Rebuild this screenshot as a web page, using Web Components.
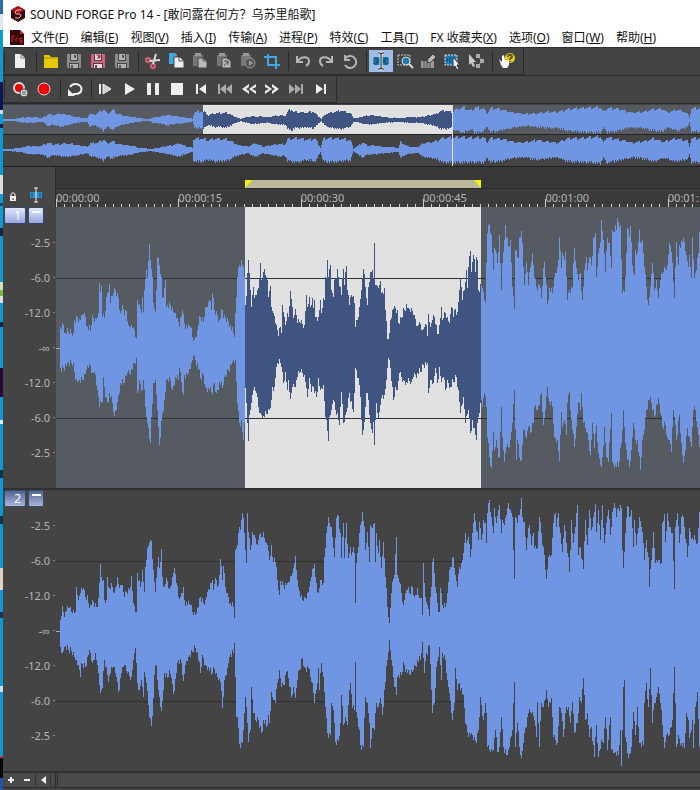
<!DOCTYPE html>
<html lang="zh-CN">
<head>
<meta charset="utf-8">
<title>SOUND FORGE Pro 14</title>
<style>
  body {
    margin: 0;
    background: #444;
    font-family: "Noto Sans", "Noto Sans CJK SC", sans-serif;
    font-size: 12px;
  }
</style>
</head>
<body>
<app-window>
  <title-bar slot="head">SOUND FORGE Pro 14 - [敢问露在何方？乌苏里船歌]</title-bar>
  <menu-bar slot="head">
    <menu-item key="F">文件</menu-item>
    <menu-item key="E">编辑</menu-item>
    <menu-item key="V">视图</menu-item>
    <menu-item key="I">插入</menu-item>
    <menu-item key="A">传输</menu-item>
    <menu-item key="P">进程</menu-item>
    <menu-item key="C">特效</menu-item>
    <menu-item key="T">工具</menu-item>
    <menu-item key="X">FX 收藏夹</menu-item>
    <menu-item key="O">选项</menu-item>
    <menu-item key="W">窗口</menu-item>
    <menu-item key="H">帮助</menu-item>
  </menu-bar>
  <tool-bar style="--bar-width: 521px">
    <tool-button icon="new" label="New"></tool-button>
    <tool-separator></tool-separator>
    <tool-button icon="open" label="Open"></tool-button>
    <tool-button icon="save" label="Save"></tool-button>
    <tool-button icon="saveas" label="Save As"></tool-button>
    <tool-button icon="save" label="Save All"></tool-button>
    <tool-separator></tool-separator>
    <tool-button icon="cut" label="Cut"></tool-button>
    <tool-button icon="copy" label="Copy"></tool-button>
    <tool-button icon="paste" label="Paste"></tool-button>
    <tool-button icon="pastespecial" label="Paste Special"></tool-button>
    <tool-button icon="mix" label="Mix"></tool-button>
    <tool-button icon="crop" label="Trim/Crop"></tool-button>
    <tool-separator></tool-separator>
    <tool-button icon="undo" label="Undo"></tool-button>
    <tool-button icon="redo" label="Redo"></tool-button>
    <tool-button icon="repeat" label="Repeat"></tool-button>
    <tool-separator></tool-separator>
    <tool-button icon="edit" label="Edit Tool" active></tool-button>
    <tool-button icon="magnify" label="Magnify Tool"></tool-button>
    <tool-button icon="pencil" label="Pencil Tool"></tool-button>
    <tool-button icon="event" label="Event Tool"></tool-button>
    <tool-button icon="envelope" label="Envelope Tool"></tool-button>
    <tool-separator></tool-separator>
    <tool-button icon="help" label="What's This?"></tool-button>
  </tool-bar>
  <tool-bar style="--bar-width: 334px">
    <tool-button icon="arm" label="Arm"></tool-button>
    <tool-button icon="record" label="Record"></tool-button>
    <tool-separator></tool-separator>
    <tool-button icon="loop" label="Loop"></tool-button>
    <tool-separator></tool-separator>
    <tool-button icon="playall" label="Play All"></tool-button>
    <tool-button icon="play" label="Play"></tool-button>
    <tool-button icon="pause" label="Pause"></tool-button>
    <tool-button icon="stop" label="Stop"></tool-button>
    <tool-button icon="start" label="Go to Start"></tool-button>
    <tool-button icon="prev" label="Previous"></tool-button>
    <tool-button icon="rewind" label="Rewind"></tool-button>
    <tool-button icon="forward" label="Forward"></tool-button>
    <tool-button icon="next" label="Next"></tool-button>
    <tool-button icon="end" label="Go to End"></tool-button>
  </tool-bar>
  <wave-overview></wave-overview>
  <time-ruler></time-ruler>
  <wave-track channel="1" selected></wave-track>
  <wave-track channel="2"></wave-track>
  <scroll-strip></scroll-strip>
</app-window>

<script>
const PAGE = '<path d="M5 3h6l4 4v10H5z" fill="#eee"/><path d="M11 3v4h4" fill="none" stroke="#777"/>';
const DISK = (body, label) => `<path d="M3 3h3v7h8V3h3v14h-2v-5H5v5H3z" fill="${body}"/><path d="M7 3h6v6H7zM6 13h8v4H6z" fill="${label}"/><path d="M8 14v3M11 4v3" stroke="#555" stroke-width="2"/>`;
const CLIP = '<path d="M3 4h10v11H3z" fill="#777"/><path d="M5 2h6v3H5z" fill="#999"/>';

const ICONS = {
  new: PAGE,
  open: '<path d="M3 4h5l2 2h7v11H3z" fill="#e8c800"/><path d="M3 7h14" stroke="#a48d00"/>',
  save: DISK('#8c8c8c', '#b4b4b4'),
  saveas: DISK('#d8607a', '#eed8dc') + '<path d="M8 4h4v3H9" fill="none" stroke="#c03050"/>',
  cut: '<g fill="none" stroke="#e0607c" stroke-width="2"><circle cx="5" cy="9" r="2"/><circle cx="10" cy="15" r="2"/></g><path d="M7 10l10-1M10 13l3-10" stroke="#ddd" stroke-width="2"/>',
  copy: '<path d="M2 2h6l2 2v9H2z" fill="#43a6df"/><path d="M7 6h6l4 4v7H7z" fill="#eee" stroke="#444"/><path d="M12 6v4h4" fill="none" stroke="#555"/>',
  paste: CLIP + '<path d="M8 7h5l4 3v7H8z" fill="#bbb" stroke="#444"/><path d="M13 7v3h4" fill="none" stroke="#555"/>',
  pastespecial: CLIP + '<path d="M8 7h5l4 3v7H8z" fill="#bbb" stroke="#444"/><path d="M10 10h4v4M10 15l4-5" fill="none" stroke="#444"/>',
  mix: CLIP + '<circle cx="12" cy="12" r="5" fill="#555" stroke="#999"/><path d="M11 9v6l4-3z" fill="#999"/>',
  crop: '<path d="M6 3v11h12M2 6h12v12" fill="none" stroke="#43a6df" stroke-width="2"/>',
  undo: '<path d="M4 5v6h6" fill="none" stroke="#b5b5b5" stroke-width="2"/><path d="M5 10c3-5 11-5 11 0 0 3-1 4-3 5" fill="none" stroke="#b5b5b5" stroke-width="2"/>',
  redo: '<path d="M16 5v6h-6" fill="none" stroke="#b5b5b5" stroke-width="2"/><path d="M15 10C12 5 4 5 4 10c0 3 1 4 3 5" fill="none" stroke="#b5b5b5" stroke-width="2"/>',
  repeat: '<path d="M5 4v5h5M5 8a6 6 0 1 1 0 6" fill="none" stroke="#b5b5b5" stroke-width="2"/>',
  edit: '<path d="M3 6h14v8H3z" fill="#1680bd"/><path d="M3 7h3v6H3zM14 7h3v6h-3zM7 8v4M13 8v4" fill="none" stroke="#164862"/><path d="M7 2h2l1 1 1-1h2M10 3v14M7 18h2l1-1 1 1h2" fill="none" stroke="#ddd" stroke-width="3"/><path d="M7 2h2l1 1 1-1h2M10 3v14M7 18h2l1-1 1 1h2" fill="none" stroke="#222"/>',
  magnify: '<path d="M3 4h12v10H3z" fill="none" stroke="#ccc" stroke-dasharray="2 1"/><circle cx="11" cy="10" r="4" fill="#217eac" stroke="#ddd"/><path d="M14 13l4 4" stroke="#ddd" stroke-width="2"/>',
  pencil: '<path d="M2 10h13v7H2z" fill="#999"/><path d="M5 10v7M8 10v7M11 10v7" stroke="#555"/><path d="M8 12l1-4 5-5 3 3-5 5z" fill="#bbb" stroke="#444"/>',
  event: '<path d="M3 4h12v10H3z" fill="#1680bd" stroke="#ddd" stroke-dasharray="2 1"/><path d="M5 7v4M8 6v6M12 7v4" stroke="#173a55"/><path d="M11 6v11l2-2 2 4 2-1-2-4h3z" fill="#eee" stroke="#333"/>',
  envelope: '<path d="M3 3v11l2-2 2 4 2-1-2-4h3z" fill="#ccc"/><path d="M12 5l4 5-4 5" fill="none" stroke="#999"/><path d="M10 3h4v4h-4zM14 8h4v4h-4zM10 13h4v4h-4z" fill="#aaa"/>',
  help: '<circle cx="13" cy="7" r="5" fill="#e5cd1b"/><path d="M11 6c0-3 4-3 4 0 0 1-2 1-2 3M13 10v1" fill="none" stroke="#64570b" stroke-width="2"/><path d="M2 8l3 3V5l2-1 1 5 4 1v4l-2 3H6l-2-3z" fill="#fff"/>',
  arm: '<circle cx="9" cy="9" r="5" fill="#e00" stroke="#ddd" stroke-width="2"/><circle cx="14" cy="14" r="4" fill="#ddd" stroke="#444"/><path d="M13 12v4M15 12v4" stroke="#555"/>',
  record: '<circle cx="10" cy="10" r="6" fill="#f00000" stroke="#ddd"/>',
  loop: '<path d="M5 8a6 5 0 1 1 6 7H8" fill="none" stroke="#eee" stroke-width="2"/><path d="M3 10v7h7z" fill="#eee"/>',
  playall: '<path d="M5 5v10" stroke="#eee" stroke-width="2"/><path d="M8 5v10l8-5z" fill="#ccc" stroke="#eee"/>',
  play: '<path d="M6 4v12l10-6z" fill="#eee"/>',
  pause: '<path d="M4 4h4v12H4zM12 4h4v12h-4z" fill="#eee"/>',
  stop: '<path d="M4 4h12v12H4z" fill="#eee"/>',
  start: '<path d="M6 5v10" stroke="#eee" stroke-width="2"/><path d="M15 5v10l-7-5z" fill="#eee"/>',
  prev: '<path d="M4 5v10" stroke="#aaa" stroke-width="2"/><path d="M11 5v10l-6-5zM17 5v10l-6-5z" fill="#aaa"/>',
  rewind: '<path d="M10 5v3l-3 2 3 2v3l-7-5zM17 5v3l-4 2 4 2v3l-7-5z" fill="#eee"/>',
  forward: '<path d="M3 5v3l4 2-4 2v3l7-5zM10 5v3l3 2-3 2v3l7-5z" fill="#eee"/>',
  next: '<path d="M16 5v10" stroke="#aaa" stroke-width="2"/><path d="M9 5v10l6-5zM3 5v10l6-5z" fill="#aaa"/>',
  end: '<path d="M15 5v10" stroke="#eee" stroke-width="2"/><path d="M6 5v10l7-5z" fill="#eee"/>'
};

const CURSOR = '<path d="M1 6h12v6H1z" fill="#2e8fc6"/><path d="M3 7v4M11 7v4" stroke="#174e70"/><path d="M5 2h4M7 2v14M5 16h4" stroke="#eee" fill="none"/>';

// Envelope outlines, stored as "x,y" in thirds of a pixel. Each block has its own x origin.
const PEAKS = {
  1: {
    dy: 3,
    blocks: [
      [-6,
        '30,350 38,345 46,368 55,365 68,370 73,330 80,320 85,335 92,315 98,312 105,320 112,350 120,362 127,315 133,335 140,320 143,310 146,220 150,245 154,228 157,320 163,325 168,260 172,248 178,222 181,280 188,250 196,240 203,265 209,310 215,285 222,315 227,302 233,345 241,350 248,350 257,385 260,270 266,282 272,310 275,262 279,305 283,240 287,180 291,205 296,103 301,150 305,200 309,280 314,305 318,240 322,140 327,165 332,200 336,265 342,235 345,210 348,290 360,285 372,310 382,325 388,350 396,300 402,340 412,355 420,350 425,380 433,388 440,360 448,318 458,335 465,290 472,290 478,270 483,300 487,250 491,300 500,315 508,330 515,300 520,325 530,325 540,345 553,380 557,260 561,200 567,165 573,150 578,170 582,200',
        '30,475 40,475 50,460 68,458 75,510 85,512 98,510 108,480 118,462 125,490 133,485 142,540 147,592 155,575 160,500 165,560 170,580 178,550 185,580 193,618 200,575 210,520 220,520 232,490 245,480 257,445 262,550 268,510 275,540 280,510 285,590 290,640 295,655 300,700 304,620 310,520 315,510 320,600 324,650 328,705 335,610 342,570 348,510 360,510 366,540 375,500 383,510 388,475 398,555 403,495 415,490 422,460 430,438 440,460 450,505 458,495 466,530 478,540 485,552 493,520 498,550 508,515 515,535 522,500 535,480 545,455 555,450 560,580 566,640 572,630 578,690 583,640'],
      [184,
        '15,285 20,250 22,190 25,150 29,240 33,290 38,230 42,265 50,240 55,235 59,160 62,210 66,205 71,178 75,195 80,210 84,260 89,228 93,290 100,310 108,345 115,378 121,350 124,370 127,285 131,320 136,345 140,310 145,320 151,243 155,290 160,325 166,298 172,340 180,338 193,345 197,255 201,290 206,262 210,290 216,265 219,295 222,270 226,320 235,320 240,270 243,310 248,265 252,270 254,200 258,205 261,150 263,87 265,200 270,165 272,240 278,260 283,210 287,205 290,178 294,200 300,230 304,255 309,178 313,225 317,168 320,240 326,285 330,260 336,260 342,280 346,350 352,330 357,290 362,240 366,205 370,178 374,230 380,285 385,230 390,185 395,180 398,205 402,98 404,225 410,228 415,235 420,213 424,250 432,235 436,300 442,388 446,370 451,330 456,300 461,288 467,310 470,300 475,340 482,325 488,295 493,300 497,283 503,295 510,305 516,302 520,315 523,315 530,348 537,335 545,360 553,352 558,345 562,378 564,312 569,350 576,330 583,320 587,345 592,372 598,345 602,292 607,330 612,305 620,320 628,340 632,292 638,320 641,300 648,315 654,275 661,203 665,270 673,240 677,180 682,235 685,170 689,122 693,185 699,135 704,185 709,140 713,180 715,240 722,225',
        '15,535 20,640 25,692 28,615 34,580 40,540 48,550 54,590 60,610 70,618 80,612 87,600 92,570 95,530 102,530 108,470 116,448 122,470 128,518 135,485 140,540 145,510 150,568 156,530 165,530 172,500 180,485 192,495 197,535 201,560 206,505 212,545 220,530 228,562 235,505 240,540 249,525 254,620 259,630 263,692 266,620 273,600 278,570 285,600 290,610 298,645 303,545 309,640 315,615 320,595 328,550 338,605 343,550 346,475 350,505 355,505 360,560 367,675 372,635 378,550 385,570 391,640 395,670 399,635 403,705 407,580 413,625 420,585 425,555 433,555 438,510 443,443 450,475 455,530 460,570 465,530 470,540 478,490 488,510 498,515 512,515 520,500 530,488 540,485 550,465 560,460 564,550 570,510 580,518 585,475 592,518 598,470 604,515 610,500 614,540 620,510 630,530 640,515 648,500 655,540 661,610 668,560 676,640 683,600 689,670 695,630 700,655 707,690 712,640 720,580 724,570'],
      [419,
        '22,235 29,280 34,160 37,70 43,42 48,75 53,180 57,115 61,120 65,160 72,75 77,240 82,160 87,90 90,45 94,80 100,110 106,90 112,230 117,298 121,120 128,145 133,85 137,62 141,100 147,225 152,155 160,225 165,170 170,130 176,200 184,230 193,225 198,265 203,175 208,157 212,225 217,283 222,235 230,250 236,200 246,170 250,150 253,80 257,175 262,130 266,150 271,125 276,270 282,240 290,235 295,160 298,115 303,175 310,210 315,190 320,270 327,180 332,140 337,180 342,140 347,165 355,85 359,70 364,200 370,130 375,95 379,30 384,90 390,185 396,85 402,100 407,175 412,60 417,65 420,45 424,60 427,25 432,50 436,45 440,250 447,245 452,130 457,55 462,80 466,48 472,165 476,195 480,120 487,125 491,60 496,95 501,90 507,170 514,230 520,285 525,230 531,160 537,240 543,210 550,265 556,210 565,185 575,165 582,100 588,125 597,265 603,95 608,165 613,105 620,95 626,95 632,135 638,170 642,135 648,205 652,80 658,205 664,180 668,130 671,65 675,115',
        '22,590 27,550 33,590 37,680 43,740 48,775 53,665 58,720 63,690 68,745 73,740 77,590 82,680 88,755 94,710 100,715 106,690 112,640 117,540 122,750 127,690 133,740 138,750 144,660 152,685 158,650 165,670 173,640 177,590 185,600 193,585 199,550 205,645 210,600 217,530 222,575 230,590 236,680 245,690 253,752 257,605 262,650 268,630 272,675 276,580 282,545 289,630 297,710 304,650 310,575 314,600 319,550 324,640 332,665 340,690 345,735 350,640 356,715 362,645 370,730 377,770 382,740 388,650 394,740 400,755 407,610 412,755 420,765 430,770 437,700 443,600 450,700 457,750 463,770 468,720 474,640 480,690 487,690 495,780 500,690 508,660 514,600 520,570 526,560 532,600 538,620 548,565 556,610 562,650 570,645 576,685 582,690 588,725 593,600 598,620 604,690 611,615 617,700 624,760 630,720 636,655 642,680 648,710 655,600 661,600 666,650 675,725']
    ]
  },
  2: {
    dy: 0,
    blocks: [
      [-6,
        '30,390 36,348 41,380 48,362 58,355 65,370 74,365 79,290 84,330 90,310 100,295 105,320 110,315 117,355 127,330 138,350 143,325 149,222 154,260 158,270 162,330 168,330 172,260 177,295 185,290 191,310 200,262 206,295 214,285 222,320 228,305 238,300 244,258 248,340 257,367 262,250 270,290 277,240 281,305 286,230 291,175 297,160 304,152 308,240 315,305 320,230 324,200 327,235 332,178 337,260 342,290 349,265 356,298 362,285 367,260 371,235 377,280 383,320 390,320 399,290 403,330 412,345 420,345 428,375 437,370 445,350 450,322 458,340 465,330 470,305 478,300 485,270 489,300 495,265 502,290 507,255 511,208 515,270 520,228 525,290 532,310 540,340 550,350 553,385 556,180 562,165 566,110 571,120 575,68 580,85 584,180 588,220 591,68 595,125 600,180 605,125 612,135 620,165 627,135 635,140 640,125 645,155 650,165 656,220',
        '30,470 35,490 42,470 55,480 70,485 75,510 84,525 89,562 94,520 105,530 112,500 118,480 125,518 135,490 142,525 149,610 157,595 163,510 169,530 173,575 180,550 190,530 198,560 205,605 212,550 222,525 230,550 242,560 248,510 256,475 262,580 267,600 272,570 278,620 282,545 288,580 293,645 298,680 303,708 308,625 313,555 319,525 324,600 332,662 338,600 343,550 350,565 356,540 362,565 370,612 378,550 385,510 392,520 399,572 404,525 415,500 425,485 433,465 440,485 450,550 457,495 466,525 475,530 482,555 490,530 497,550 503,570 510,575 516,655 522,570 530,535 538,500 548,490 553,460 557,680 562,680 568,762 575,760 580,720 586,620 590,700 594,755 600,720 604,592 608,670 615,690 625,690 633,730 640,690 648,710 656,670'],
      [184,
        '88,210 93,165 97,200 105,215 110,270 116,315 121,272 130,285 140,280 148,275 155,250 160,235 164,197 168,240 173,290 180,320 190,333 200,310 207,290 214,260 221,222 226,260 233,310 240,270 248,280 252,200 257,130 263,82 268,100 273,110 278,175 281,200 287,85 295,78 299,130 303,205 308,100 313,205 319,100 323,205 330,170 334,195 340,170 343,190 346,340 349,220 356,130 361,105 367,65 372,110 376,180 380,125 386,215 391,105 396,115 401,98 404,215 409,130 414,190 418,150 424,235 430,155 434,260 440,350 446,398 452,310 457,275 463,255 467,140 470,255 478,275 484,310 490,345 495,310 503,290 508,310 515,290 522,320 530,295 536,325 542,325 547,375 550,220 555,320 562,345 568,378 573,290 576,215 580,205 585,290 591,340 597,365 601,295 607,345 614,350 620,310 626,240 632,230 640,200 646,255 652,290 656,230 663,220 668,190 674,130 679,160 684,140 690,200 696,130 699,100 703,68 709,120 713,150 718,95 722,150 728,90 735,100',
        '88,700 93,605 98,630 105,640 110,580 116,540 122,590 130,585 137,545 145,565 153,620 160,590 166,625 172,570 178,540 186,505 192,530 203,535 210,560 216,580 221,640 228,600 233,535 238,600 243,520 248,560 254,650 260,730 269,735 274,640 280,660 286,755 294,752 300,700 303,615 308,705 315,680 320,705 326,600 330,580 335,655 341,660 345,515 349,665 356,720 361,765 369,772 374,620 380,640 386,700 391,775 397,715 403,720 408,640 414,650 420,625 427,675 433,600 440,510 446,450 452,510 458,560 467,615 472,560 482,555 490,515 500,550 510,555 520,540 530,510 540,510 547,455 551,550 558,490 568,465 573,600 576,670 582,640 588,530 597,470 602,570 607,490 615,510 621,570 628,610 635,690 642,640 646,535 651,600 658,580 668,615 675,700 685,740 692,730 700,750 708,760 714,720 720,620 728,690 735,640'],
      [419,
        '32,160 37,70 43,30 48,80 53,130 57,55 63,100 68,60 72,45 77,130 82,90 88,105 95,55 100,38 105,60 111,80 114,180 117,268 120,80 127,100 133,75 137,25 141,80 147,95 153,180 158,115 162,105 167,165 173,130 178,175 185,175 191,80 196,95 200,165 208,195 213,268 218,200 228,195 233,100 239,68 244,110 250,70 255,130 260,185 266,105 272,160 278,200 282,245 287,90 293,160 300,110 305,45 308,195 315,170 324,238 330,90 336,165 343,60 348,120 353,80 359,42 364,125 369,60 375,150 380,45 386,160 392,100 398,60 404,135 410,65 418,38 424,80 430,55 437,55 440,180 444,235 449,130 457,48 462,80 467,60 473,170 478,90 484,165 491,82 498,110 503,160 508,210 512,150 518,200 523,290 528,210 534,125 540,220 550,210 557,220 561,100 566,72 570,155 577,70 583,110 591,130 597,298 601,110 606,68 612,160 617,80 622,75 628,110 636,200 641,115 650,145 660,150 667,160 671,65 675,70',
        '32,670 37,770 45,785 55,780 60,720 66,785 73,770 78,680 84,770 95,795 103,770 112,720 117,575 121,770 127,700 132,770 137,805 143,760 150,715 160,670 170,665 177,690 182,740 186,635 192,770 199,640 205,650 213,600 220,650 228,625 235,740 245,760 252,650 258,670 265,740 272,650 280,650 286,700 292,635 298,730 306,700 312,620 318,640 324,565 330,690 336,670 343,740 349,710 356,800 363,705 370,800 377,750 384,760 389,680 395,780 400,750 404,680 408,780 418,790 428,795 434,720 438,828 443,590 447,570 451,740 460,805 467,770 474,665 479,735 487,650 493,760 504,765 508,640 514,580 518,650 525,535 531,700 537,640 542,620 550,592 556,640 563,740 567,775 572,735 582,735 591,690 597,530 602,770 610,735 618,760 626,775 632,670 638,690 643,745 650,690 655,775 660,650 667,605 671,770 675,700']
    ]
  }
};

// Half heights for the two overview strips, same unit.
const OVERVIEW = [
  '10,2 40,3 70,8 100,8 125,6 145,18 155,14 180,20 200,16 220,10 250,6 262,6 268,18 285,16 300,26 308,32 320,20 338,30 350,18 370,14 400,8 440,2 460,8 480,10 500,16 520,12 545,10 575,4 582,22 595,26 607,24 612,24 625,14 640,20 680,22 700,12 720,4 755,12 780,10 800,8 820,12 855,14 860,24 872,34 880,24 920,22 935,26 950,14 962,4 975,18 990,22 1020,28 1050,20 1060,8 1070,5 1080,10 1110,14 1150,8 1200,6 1230,9 1260,8 1285,14 1305,18 1320,26 1335,28 1356,22 1362,30 1390,38 1410,28 1425,38 1450,34 1462,20 1470,36 1500,32 1530,24 1570,18 1610,20 1640,24 1670,24 1700,32 1750,36 1800,38 1808,24 1820,36 1850,34 1890,22 1930,24 1950,30 1985,34 2000,22 2030,32 2060,20 2068,6 2074,34 2100,36',
  '10,2 60,6 80,12 120,12 145,22 160,16 200,20 240,14 262,10 270,20 290,22 308,32 320,20 335,26 350,18 390,14 410,8 450,3 480,8 515,14 535,20 560,10 576,6 580,32 600,36 625,28 640,34 680,32 710,16 740,10 765,20 790,10 830,18 855,18 860,32 890,36 920,30 945,34 960,6 968,34 1000,36 1050,30 1060,4 1085,22 1100,14 1130,12 1170,8 1195,6 1200,24 1220,12 1255,8 1265,20 1300,24 1330,36 1380,38 1420,36 1450,38 1462,24 1470,36 1510,32 1540,24 1570,22 1610,30 1630,26 1670,22 1700,34 1750,36 1800,40 1808,22 1818,38 1860,30 1900,22 1940,28 1960,34 1990,24 2025,34 2060,28 2068,12 2072,36 2100,36'
];

const parse = (text, dx, dy) => text.split(' ').map(p => {
  const [x, y] = p.split(',').map(Number);
  return [Math.round(x / 3 + dx), y / 3 + dy];
});

// one value per pixel column, with a little roughness between the stored points
function columns(points, rough) {
  const out = new Map();
  for (let i = 0; i < points.length - 1; i++) {
    const [x0, y0] = points[i];
    const [x1, y1] = points[i + 1];
    for (let x = x0; x <= x1; x++) {
      const t = x1 === x0 ? 0 : (x - x0) / (x1 - x0);
      const noise = x === x0 || x === x1 ? 0 : ((x * 37) % 11 - 5) * rough;
      out.set(x, y0 + (y1 - y0) * t + noise);
    }
  }
  return out;
}

function barsPath(top, bottom) {
  let d = '';
  for (const [x, y] of top) {
    const a = Math.round(y);
    const b = Math.round(bottom.get(x) ?? y);
    d += `M${x} ${a}h1V${b}h-1z`;
  }
  return d;
}

function trackPath(channel) {
  const { dy, blocks } = PEAKS[channel];
  const top = blocks.flatMap(b => parse(b[1], b[0], dy));
  const bottom = blocks.flatMap(b => parse(b[2], b[0], dy));
  return barsPath(columns(top, 0.8), columns(bottom, 0.8));
}

function overviewPath(index, center) {
  const half = columns(parse(OVERVIEW[index], -3, 0), 0);
  const top = new Map();
  const bottom = new Map();
  for (const [x, h] of half) {
    top.set(x, center - Math.max(0.5, h + ((x * 29) % 7 - 3) * h / 24));
    bottom.set(x, center + Math.max(0.5, h + ((x * 17) % 7 - 3) * h / 24));
  }
  return barsPath(top, bottom);
}

class BaseElement extends HTMLElement {
  connectedCallback() {
    if (this.shadowRoot) return;
    this.attachShadow({ mode: 'open' });
    this.shadowRoot.innerHTML = this.render();
  }
}

class AppWindow extends BaseElement {
  render() {
    return `
      <style>
        :host { display: flex; min-height: 100vh; }
        .desktop {
          width: 3px;
          flex: none;
          background: linear-gradient(
            #2b6ca8 0 14px, #dce8f2 14px 30px, #0a9bd2 30px 82px, #0c1456 82px 110px,
            #cde 110px 114px, #0a9bd2 114px 124px, #124 124px 128px, #0a9bd2 128px 175px,
            #ddd 175px 194px, #0a9bd2 194px 203px, #1a4a70 203px 206px, #0a9bd2 206px 228px,
            #124 228px 236px, #0a9bd2 236px 282px, #d5dfc0 282px 290px, #7ab648 290px 296px,
            #ddd 296px 303px, #0a9bd2 303px 322px, #124 322px 327px, #0a9bd2 327px 368px,
            #2c0535 368px 397px, #0a9bd2 397px 420px, #def 420px 424px, #0a9bd2 424px 470px,
            #0b3350 470px 478px, #0a9bd2 478px 516px, #134 516px 524px, #0a9bd2 524px 568px,
            #ddd3c8 568px 590px, #0a9bd2 590px 612px, #235 612px 618px, #0a9bd2 618px 686px,
            #cde 686px 692px, #0a9bd2 692px 756px, #c33 756px 758px, #080808 758px 778px, #25a 778px);
        }
        .frame { flex: 1; min-width: 0; background: #444; }
        .head { background: #fff; }
      </style>
      <div class="desktop"></div>
      <div class="frame">
        <div class="head"><slot name="head"></slot></div>
        <slot></slot>
      </div>`;
  }
}

class TitleBar extends BaseElement {
  render() {
    return `
      <style>
        :host { display: flex; align-items: center; gap: 4px; height: 28px; padding-left: 7px; color: #111; white-space: nowrap; }
      </style>
      <svg width="16" height="16" viewBox="0 0 16 16" aria-hidden="true">
        <path d="M8 0l7 4v8l-7 4-7-4V4z" fill="#3c090b"/>
        <path d="M8 0l7 4-7 4-7-4z" fill="#a8161c"/>
        <path d="M11 4H7L5 6l1 2h4l1 2-2 2H5" fill="none" stroke="#f4b6b6"/>
      </svg>
      <span><slot></slot></span>`;
  }
}

class MenuBar extends BaseElement {
  render() {
    return `
      <style>
        :host { display: flex; align-items: center; gap: 12px; height: 19px; padding-left: 7px; }
        svg { flex: none; margin-right: -5px; }
      </style>
      <svg width="14" height="15" viewBox="0 0 14 15" aria-hidden="true">
        <path d="M0 0h10l4 4v11H0z" fill="#300507"/>
        <path d="M10 0l4 4h-4z" fill="#d22"/>
        <path d="M2 12V6h3M2 9h2M6 12V8h2M10 8h2v5h-2M10 8v3h2" fill="none" stroke="#d3262e"/>
      </svg>
      <slot></slot>`;
  }
}

class MenuItem extends BaseElement {
  render() {
    return `
      <style>
        :host { display: block; flex: none; }
        button { display: block; border: 0; padding: 0; background: none; color: #111; font: inherit; line-height: 18px; white-space: nowrap; }
      </style>
      <button type="button"><slot></slot>(<u>${this.getAttribute('key')}</u>)</button>`;
  }
}

class ToolBar extends BaseElement {
  render() {
    return `
      <style>
        :host { display: block; border-top: 1px solid #2e2e2e; background: #444; }
        .bar { display: flex; align-items: center; box-sizing: border-box; height: 27px; max-width: var(--bar-width); padding-right: 4px; border-right: 1px solid #2b2b2b; border-bottom: 1px solid #2b2b2b; }
        .grip { width: 2px; height: 19px; margin-right: 3px; flex: none; border-right: 1px solid #2c2c2c; box-sizing: border-box; }
      </style>
      <div class="bar"><span class="grip"></span><slot></slot></div>`;
  }
}

class ToolButton extends BaseElement {
  render() {
    return `
      <style>
        :host { display: block; flex: 1 1 0; min-width: 0; }
        button { display: flex; align-items: center; justify-content: center; width: 100%; height: 22px; padding: 0; border: 0; background: none; }
        :host([active]) button { background: #9dbce8; }
        svg { flex: none; }
      </style>
      <button type="button" aria-label="${this.getAttribute('label')}">
        <svg width="20" height="20" viewBox="0 0 20 20">${ICONS[this.getAttribute('icon')]}</svg>
      </button>`;
  }
}

class ToolSeparator extends BaseElement {
  render() {
    return `
      <style>
        :host { display: block; flex: none; width: 7px; height: 20px; }
        i { display: block; width: 1px; height: 100%; margin-left: 4px; background: #2b2b2b; }
      </style>
      <i></i>`;
  }
}

class WaveOverview extends BaseElement {
  render() {
    return `
      <style>
        :host { display: block; padding-top: 1px; border-top: 1px solid #2b2b2b; border-bottom: 1px solid #1f1f1f; }
        svg { display: block; width: 100%; height: 61px; shape-rendering: crispEdges; }
      </style>
      <svg aria-hidden="true">
        <clipPath id="sel"><rect x="200" width="249" height="29"/></clipPath>
        <rect width="100%" height="29" fill="#565b62"/>
        <rect x="200" width="249" height="29" fill="#e1e1e1"/>
        <path d="${overviewPath(0, 15)}" fill="#7096e3"/>
        <path d="${overviewPath(0, 15)}" fill="#3f5480" clip-path="url(#sel)"/>
        <rect y="29" width="100%" height="1" fill="#222"/>
        <path d="${overviewPath(1, 45)}" fill="#7096e3"/>
        <rect x="449" width="1" height="61" fill="#ddd"/>
      </svg>`;
  }
}

class TimeRuler extends BaseElement {
  render() {
    const labels = ['00:00:00', '00:00:15', '00:00:30', '00:00:45', '00:01:00', '00:01:'];
    let ticks = '';
    for (let i = 0; i < 240; i++) {
      const big = i % 15 === 0;
      ticks += `<rect x="${Math.round(i * 8.155)}" y="${big ? 0 : 5}" width="1" height="8" fill="#ccc"/>`;
    }
    return `
      <style>
        :host { display: flex; height: 40px; overflow: hidden; }
        .corner { display: flex; align-items: flex-end; box-sizing: border-box; width: 53px; flex: none; padding: 0 0 3px 6px; gap: 12px; border-right: 1px solid #2b2b2b; background: #464646; }
        .main { flex: 1; min-width: 0; background: #383838; }
        .markers { display: flex; align-items: flex-end; height: 21px; padding-left: 189px; border-bottom: 1px solid #2c2c2c; }
        .region { display: flex; justify-content: space-between; width: 236px; height: 8px; background: #bbbb9c; }
        .times { display: grid; height: 18px; overflow: hidden; background: #3b3b3b; }
        .labels, .times svg { grid-area: 1 / 1; }
        .labels { display: flex; min-width: 0; color: #b5b5b5; font: 11px/17px "Noto Sans", sans-serif; }
        .labels span { flex: 0 0 19%; white-space: nowrap; box-sizing: border-box; }
        .labels span:last-child { flex: none; }
        .times svg { width: 100%; height: 8px; align-self: end; shape-rendering: crispEdges; }
      </style>
      <div class="corner">
        <svg width="8" height="14" viewBox="0 0 8 14"><path d="M1 6h6v5H1z" fill="#eee"/><path d="M2 6V4q2-3 4 0v2" fill="none" stroke="#eee"/><path d="M4 8v2" stroke="#333"/></svg>
        <svg width="14" height="18" viewBox="0 0 14 18">${CURSOR}</svg>
      </div>
      <div class="main">
        <div class="markers">
          <div class="region">
            <svg width="7" height="8"><path d="M0 0h7L0 8z" fill="#fff200"/></svg>
            <svg width="7" height="8"><path d="M0 0h7v8z" fill="#fff200"/></svg>
          </div>
        </div>
        <div class="times">
          <div class="labels">${labels.map(l => `<span>${l}</span>`).join('')}</div>
          <svg aria-hidden="true">${ticks}</svg>
        </div>
      </div>`;
  }
}

class WaveTrack extends BaseElement {
  render() {
    const channel = this.getAttribute('channel');
    const selected = this.hasAttribute('selected');
    const d = trackPath(channel);
    const levels = ['-2.5', '-6.0', '-12.0', '-∞', '-12.0', '-6.0', '-2.5'];
    return `
      <style>
        :host { display: flex; height: 281px; border-bottom: 2px solid #303030; --lo: #a9b6d6; --hi: #53658f; --bar: #fff; --bg: #444; }
        :host([selected]) { --lo: #96a8dc; --hi: #dfe6f8; --bar: #f4f7ff; --bg: #565b62; }
        .gutter { box-sizing: border-box; width: 53px; flex: none; }
        .head { display: flex; gap: 2px; height: 18px; padding-left: 1px; box-sizing: border-box; }
        button { box-sizing: border-box; height: 17px; padding: 0 4px 0 0; border: 1px solid #394a72; border-radius: 2px; color: #fff; background: linear-gradient(var(--hi), var(--lo)); font: 12px/15px "Noto Sans", sans-serif; text-align: right; }
        .num { width: 22px; }
        .min { display: flex; justify-content: center; width: 16px; padding: 3px 0 0; }
        .min i { width: 9px; height: 2px; background: var(--bar); }
        ul { margin: 0; padding: 0; list-style: none; color: #b5b5b5; font: 11px/35px "Noto Sans", sans-serif; }
        li { display: flex; align-items: center; justify-content: flex-end; gap: 3px; height: 35px; }
        li::after { content: ""; width: 2px; height: 1px; margin-right: 1px; background: #888; }
        .wave { flex: 1; min-width: 0; height: 281px; background: var(--bg); shape-rendering: crispEdges; }
      </style>
      <div class="gutter">
        <div class="head">
          <button type="button" class="num">${channel}</button>
          <button type="button" class="min" aria-label="Minimize channel"><i></i></button>
        </div>
        <ul>${levels.map(l => `<li>${l}</li>`).join('')}</ul>
      </div>
      <svg class="wave" aria-hidden="true">
        <clipPath id="sel"><rect x="189" width="236" height="281"/></clipPath>
        ${selected ? '<rect x="189" width="236" height="281" fill="#e1e1e1"/>' : ''}
        <path d="M0 71h4000v1H0zM0 211h4000v1H0z" fill="#303133"/>
        <rect y="141" width="5" height="1" fill="#aab"/>
        <path d="${d}" fill="#7096e3"/>
        ${selected ? `<path d="${d}" fill="#3f5480" clip-path="url(#sel)"/>` : ''}
      </svg>`;
  }
}

class ScrollStrip extends BaseElement {
  render() {
    return `
      <style>
        :host { display: flex; height: 14px; border-bottom: 1px solid #2c2c2c; background: #4a4a4a; }
        button { display: flex; align-items: center; justify-content: center; width: 16px; padding: 0; border: 0; background: none; }
        .left { border: solid #333; border-width: 0 1px; }
        .thumb { flex: 1; margin-left: 4px; border-left: 3px double #2c2c2c; }
      </style>
      <button type="button" aria-label="Zoom in"><svg width="6" height="6"><path d="M3 0v6M0 3h6" stroke="#eee" stroke-width="2"/></svg></button>
      <button type="button" aria-label="Zoom out"><svg width="6" height="6"><path d="M0 3h6" stroke="#eee" stroke-width="2"/></svg></button>
      <button type="button" class="left" aria-label="Scroll left"><svg width="5" height="8"><path d="M5 0v8L0 4z" fill="#eee"/></svg></button>
      <div class="thumb"></div>`;
  }
}

customElements.define('app-window', AppWindow);
customElements.define('title-bar', TitleBar);
customElements.define('menu-bar', MenuBar);
customElements.define('menu-item', MenuItem);
customElements.define('tool-bar', ToolBar);
customElements.define('tool-button', ToolButton);
customElements.define('tool-separator', ToolSeparator);
customElements.define('wave-overview', WaveOverview);
customElements.define('time-ruler', TimeRuler);
customElements.define('wave-track', WaveTrack);
customElements.define('scroll-strip', ScrollStrip);
</script>
</body>
</html>
